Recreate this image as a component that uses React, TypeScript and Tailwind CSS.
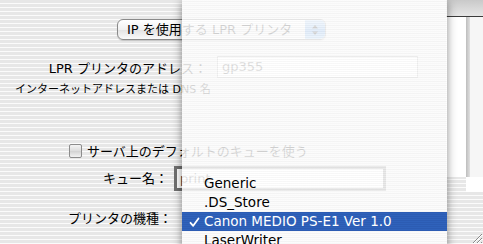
import React from "react";

const font = "font-['DejaVu_Sans','Noto_Sans_CJK_JP',sans-serif]";
const stripes =
  "bg-[repeating-linear-gradient(to_bottom,#e7e7e7_0px,#e7e7e7_3px,#fbfbfb_3px,#fbfbfb_4px)]";

function Checkmark() {
  return (
    <svg width="11" height="11" viewBox="0 0 11 11" className="absolute left-[7px] top-[5px]">
      <path d="M1.5 5.8 L4.2 8.8 L9.5 1.5" fill="none" stroke="white" strokeWidth="1.8" strokeLinecap="round" strokeLinejoin="round" />
    </svg>
  );
}

export default function App() {
  return (
    <div className={`relative w-[483px] h-[244px] overflow-hidden ${stripes} ${font} text-black`}>
      <div className="flex h-full">
        {/* Dialog content */}
        <div className="w-[446px] flex flex-col">
          {/* Popup button */}
          <div className="mt-[19px] ml-[117px] w-[209px] h-[21px] flex rounded-[6px] border border-[#8a8a8a] bg-[linear-gradient(to_bottom,#ffffff,#f1f1f1_50%,#e2e2e2_51%,#fafafa)] shadow-[0_1px_1px_rgba(0,0,0,0.15)] overflow-hidden">
            <div className="flex-1 flex items-center pl-[9px] text-[13px] leading-none whitespace-nowrap">
              IP を使用する LPR プリンタ
            </div>
            <div className="w-[20px] h-full bg-[linear-gradient(to_bottom,#a9cdf5,#5a9ce8_50%,#3a82dd_51%,#8fc3f5)] flex flex-col items-center justify-center gap-[2px]">
              <svg width="8" height="12" viewBox="0 0 8 12">
                <path d="M4 1 L7 4.5 L1 4.5 Z M4 11 L7 7.5 L1 7.5 Z" fill="black" />
              </svg>
            </div>
          </div>

          {/* Address row */}
          <div className="mt-[16px] flex items-center">
            <div className="w-[207px] text-right text-[13px] leading-none pt-[3px] whitespace-nowrap">LPR プリンタのアドレス：</div>
            <div className="ml-[10px] w-[201px] h-[22px] bg-white border border-[#a8a8a8] border-t-[#777] flex items-center pl-[4px] text-[13px] text-[#333]">
              gp355
            </div>
          </div>
          <div className="ml-[15px] mt-[5px] text-[11px] leading-[13px] whitespace-nowrap">
            インターネットアドレスまたは DNS 名
          </div>

          {/* Checkbox */}
          <div className="mt-[48px] ml-[69px] flex items-center gap-[5px]">
            <div className="w-[13px] h-[14px] rounded-[2px] border border-[#8c8c8c] bg-[linear-gradient(to_bottom,#f4f4f4,#dcdcdc_50%,#d2d2d2_51%,#f2f2f2)]" />
            <div className="text-[13px] leading-none whitespace-nowrap">サーバ上のデフォルトのキューを使う</div>
          </div>

          {/* Queue name row */}
          <div className="mt-[8px] flex items-center">
            <div className="w-[168px] text-right text-[13px] leading-none whitespace-nowrap">キュー名：</div>
            <div className="ml-[6px] w-[212px] h-[25px] bg-white border-[3px] border-[#707070] flex items-center pl-[3px] text-[13px] text-[#444]">
              print
            </div>
          </div>

          {/* Printer type row */}
          <div className="mt-[21px] flex items-center">
            <div className="w-[172px] text-right text-[13px] leading-none whitespace-nowrap">プリンタの機種：</div>
          </div>
        </div>

        {/* Right strip (window behind) */}
        <div className="flex-1 flex flex-col">
          <div className="h-[16px] bg-[linear-gradient(to_bottom,#c9c9c9,#e6e6e6)]" />
          <div className="h-[1px] bg-[#3c3c3c]" />
          <div className="h-[160px] flex">
            <div className="w-[20px] bg-white" />
            <div className="w-[4px] bg-[linear-gradient(to_right,#bdbdbd,#e0e0e0)]" />
            <div className="flex-1 bg-[#f6f6f6]" />
          </div>
          <div className="h-[15px] flex">
            <div className="w-[20px]" />
            <div className="flex-1 bg-white" />
          </div>
          <div className="flex-1 flex items-end justify-end">
            <svg width="13" height="13" viewBox="0 0 13 13">
              <path d="M12 3 L3 12 M12 7 L7 12 M12 11 L11 12" stroke="#8a8a8a" strokeWidth="1" />
              <path d="M12 4 L4 12 M12 8 L8 12" stroke="#ffffff" strokeWidth="1" />
            </svg>
          </div>
        </div>
      </div>

      {/* Translucent popup menu */}
      <div className="absolute left-[182px] top-0 w-[265px] h-[260px] bg-[repeating-linear-gradient(to_bottom,rgba(255,255,255,0.86)_0px,rgba(255,255,255,0.86)_1px,rgba(246,246,246,0.84)_1px,rgba(246,246,246,0.84)_2px)] shadow-[0_2px_9px_rgba(0,0,0,0.45)]">
        <div className="pt-[174px] flex flex-col text-[13.5px] leading-[19px] whitespace-nowrap">
          <div className="h-[19px] pl-[22px]">Generic</div>
          <div className="h-[19px] pl-[22px]">.DS_Store</div>
          <div className="relative h-[19px] pl-[22px] text-white bg-[repeating-linear-gradient(to_bottom,#2c5cb3_0px,#2c5cb3_1px,#2f62bb_1px,#2f62bb_2px)]">
            <Checkmark />
            Canon MEDIO PS-E1 Ver 1.0
          </div>
          <div className="h-[19px] pl-[22px]">LaserWriter</div>
        </div>
      </div>
    </div>
  );
}
